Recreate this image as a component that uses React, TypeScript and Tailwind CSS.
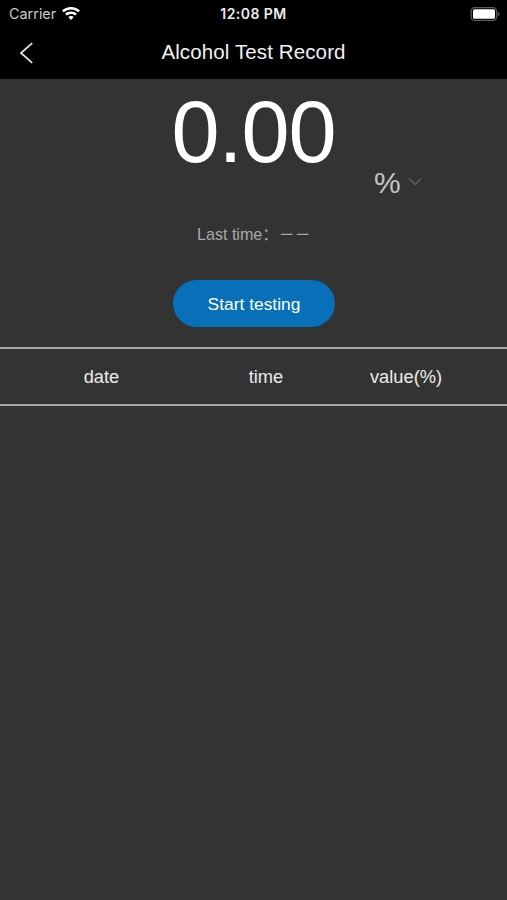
import React from 'react';

const StatusBar: React.FC = () => (
  <div className="relative flex h-[27px] items-center justify-between pl-[9px] pr-[7px] font-['Inter',sans-serif]">
    <div className="flex items-center gap-[6px] text-[#c9c9c9]">
      <span className="text-[14.4px] leading-[27px]">Carrier</span>
      <svg className="h-[14px] w-[18px]" viewBox="0 0 18 14" fill="#fff">
        <path d="M9 0C5.5 0 2.3 1.3 0 3.5l1.7 1.8A10.6 10.6 0 0 1 9 2.4c2.8 0 5.4 1.1 7.3 2.9L18 3.5A13 13 0 0 0 9 0Z" />
        <path d="M9 4.5c-2.3 0-4.4.9-5.9 2.3l1.7 1.8A6 6 0 0 1 9 6.9c1.6 0 3.1.6 4.2 1.7l1.7-1.8A8.6 8.6 0 0 0 9 4.5Z" />
        <path d="M9 9c-1.1 0-2.1.4-2.8 1.1L9 13l2.8-2.9A4 4 0 0 0 9 9Z" />
      </svg>
    </div>
    <span className="absolute inset-x-0 text-center text-[14px] leading-[27px] font-semibold tracking-[0.45px] text-[#ededed]">
      12:08 PM
    </span>
    <svg className="h-[14px] w-[30px]" viewBox="0 0 30 14" fill="none">
      <rect x="1.1" y="0.6" width="25.5" height="12.8" rx="3.6" stroke="#5c5c5c" strokeWidth="1.3" />
      <rect x="3" y="2.2" width="22" height="9.6" rx="1.5" fill="#fff" />
      <path d="M27.9 5v4.2c1-.4 1.7-1.2 1.7-2.1s-.7-1.7-1.7-2.1Z" fill="#5c5c5c" />
    </svg>
  </div>
);

const NavBar: React.FC = () => (
  <div className="relative flex h-[52px] items-center pl-[19px]">
    <button aria-label="Back">
      <svg className="h-[22px] w-[15px]" viewBox="0 0 15 22" fill="none" stroke="#e8e8e8" strokeWidth="1.7">
        <path d="M13.2 1.2 2 11l11.2 9.8" />
      </svg>
    </button>
    <h1 className="pointer-events-none absolute inset-x-0 top-0 text-center text-[20.5px] leading-[50px] tracking-[0.12px] text-[#f2f2f2]">
      Alcohol Test Record
    </h1>
  </div>
);

const App: React.FC = () => {
  return (
    <div className="flex h-[900px] w-[507px] flex-col overflow-hidden bg-[#333333] font-['Liberation_Sans','Noto_Sans_CJK_SC',sans-serif]">
      <header className="h-[79px] bg-black">
        <StatusBar />
        <NavBar />
      </header>

      {/* Current reading */}
      <main className="flex flex-col">
        <div className="mt-[10px] h-[80px] text-center text-[86.5px] leading-[86px] tracking-[-1.1px] text-white">0.00</div>
        <div className="flex h-[28px] items-center gap-[7px] pl-[374px]">
          <span className="text-[30px] leading-[28px] text-[#c4c4c4]">%</span>
          <svg className="mb-[4px] h-[9px] w-[14px]" viewBox="0 0 14 9" fill="none" stroke="#606060" strokeWidth="1.4">
            <path d="m1 1.5 6 6 6-6" />
          </svg>
        </div>
        <p className="mt-[25px] pl-[197px] text-[16.1px] leading-[24px] text-[#a8a8a8]">
          Last time：<span className="font-medium">－－</span>
        </p>
        <button className="mt-[34px] ml-[173px] h-[47px] w-[162px] rounded-full bg-[#0770b9] pt-px text-[17.4px] leading-[46px] text-white">
          Start testing
        </button>
      </main>

      {/* Record table */}
      <div className="mt-[20px] flex h-[59px] items-center border-y-2 border-[#a6a6a6] text-[18.3px] leading-[24px] text-[#ececec]">
        <span className="w-[203px] text-center">date</span>
        <span className="w-[126px] text-center">time</span>
        <span className="w-[154px] text-center">value(%)</span>
      </div>
      <div className="grow" />
    </div>
  );
};

export default App;
